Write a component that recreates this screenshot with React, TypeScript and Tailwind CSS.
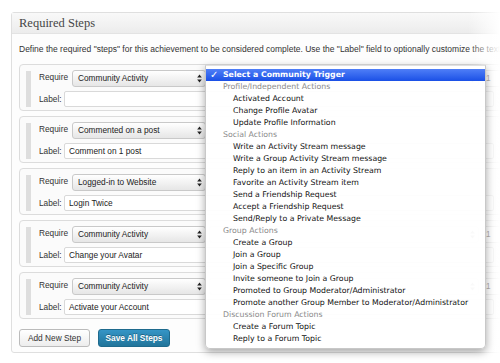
import React from "react";

type Step = { trigger: string; label: string; second: boolean };

const steps: Step[] = [
  { trigger: "Community Activity", label: "", second: true },
  { trigger: "Commented on a post", label: "Comment on 1 post", second: false },
  { trigger: "Logged-in to Website", label: "Login Twice", second: false },
  { trigger: "Community Activity", label: "Change your Avatar", second: true },
  { trigger: "Community Activity", label: "Activate your Account", second: true },
];

type MenuItem = { text: string; kind: "selected" | "group" | "item" };

const menu: MenuItem[] = [
  { text: "Select a Community Trigger", kind: "selected" },
  { text: "Profile/Independent Actions", kind: "group" },
  { text: "Activated Account", kind: "item" },
  { text: "Change Profile Avatar", kind: "item" },
  { text: "Update Profile Information", kind: "item" },
  { text: "Social Actions", kind: "group" },
  { text: "Write an Activity Stream message", kind: "item" },
  { text: "Write a Group Activity Stream message", kind: "item" },
  { text: "Reply to an item in an Activity Stream", kind: "item" },
  { text: "Favorite an Activity Stream item", kind: "item" },
  { text: "Send a Friendship Request", kind: "item" },
  { text: "Accept a Friendship Request", kind: "item" },
  { text: "Send/Reply to a Private Message", kind: "item" },
  { text: "Group Actions", kind: "group" },
  { text: "Create a Group", kind: "item" },
  { text: "Join a Group", kind: "item" },
  { text: "Join a Specific Group", kind: "item" },
  { text: "Invite someone to Join a Group", kind: "item" },
  { text: "Promoted to Group Moderator/Administrator", kind: "item" },
  { text: "Promote another Group Member to Moderator/Administrator", kind: "item" },
  { text: "Discussion Forum Actions", kind: "group" },
  { text: "Create a Forum Topic", kind: "item" },
  { text: "Reply to a Forum Topic", kind: "item" },
];

function UpDown() {
  return (
    <svg width="5" height="9" viewBox="0 0 5 9" className="shrink-0">
      <path d="M2.5 0.5 L4.8 3.6 L0.2 3.6 Z" fill="#222" />
      <path d="M2.5 8.5 L4.8 5.4 L0.2 5.4 Z" fill="#222" />
    </svg>
  );
}

function SelectBox({ text, className }: { text: string; className: string }) {
  return (
    <div
      className={`flex h-[17px] items-center justify-between rounded-[3px] border border-[#c9c9c9] bg-gradient-to-b from-[#ffffff] to-[#e6e6e6] pl-[5px] pr-[3px] text-[#222] ${className}`}
    >
      <span className="whitespace-nowrap">{text}</span>
      <UpDown />
    </div>
  );
}

function StepBox({ step }: { step: Step }) {
  return (
    <div className="flex h-[47px] w-[540px] shrink-0 gap-[8px] rounded-[4px] border border-[#dcdcdc] bg-[#fbfbfb] pl-[6px] pt-[5px]">
      <div className="mt-[1px] h-[36px] w-[5px] shrink-0 bg-[#dedede]" />
      <div className="flex flex-col gap-[4px]">
        <div className="flex items-center">
          <span className="-mt-[2px] w-[33px] text-[#333]">Require</span>
          <SelectBox text={step.trigger} className="w-[134px]" />
          {step.second && (
            <>
              <SelectBox text="" className="ml-[3px] w-[270px] opacity-60" />
              <div className="ml-[3px] flex h-[17px] w-[30px] items-center rounded-[2px] border border-[#d5d5d5] bg-white pl-[3px] text-[#222]">
                1
              </div>
            </>
          )}
        </div>
        <div className="flex items-center">
          <span className="w-[25px] text-[#333]">Label:</span>
          <div className="flex h-[16px] w-[430px] items-center rounded-[2px] border border-[#d9d9d9] bg-white pl-[4px] text-[#222]">
            {step.label}
          </div>
        </div>
      </div>
    </div>
  );
}

export default function App() {
  return (
    <div className="relative h-[363px] w-[500px] overflow-hidden bg-white font-['Liberation_Sans',Arial,sans-serif] text-[8.3px] leading-none">
      <div className="ml-[11px] mt-[12px] w-[560px] rounded-[3px] border border-[#dfdfdf] bg-[#fdfdfd]">
        <div className="flex h-[21px] items-center border-b border-[#e3e3e3] bg-gradient-to-b from-[#f9f9f9] to-[#ececec] pl-[7px] font-['Liberation_Serif',Georgia,serif] text-[12.5px] text-[#464646]">
          Required Steps
        </div>
        <div className="px-[7px] pb-[5px]">
          <div className="flex h-[30px] items-center whitespace-nowrap text-[8.5px] text-[#333]">
            Define the required "steps" for this achievement to be considered complete. Use the "Label" field to optionally customize the text
          </div>
          <div className="flex flex-col gap-[5px]">
            {steps.map((s, i) => (
              <StepBox key={i} step={s} />
            ))}
          </div>
          <div className="mt-[10px] flex gap-[8px]">
            <div className="flex h-[18px] w-[71px] items-center justify-center rounded-[3px] border border-[#bbbbbb] bg-gradient-to-b from-[#ffffff] to-[#ededed] text-[#333]">
              Add New Step
            </div>
            <div className="flex h-[18px] w-[72px] items-center justify-center rounded-[3px] border border-[#1e6a8d] bg-gradient-to-b from-[#3595c6] to-[#21759b] font-bold text-white [text-shadow:0_-1px_0_rgba(0,0,0,0.3)]">
              Save All Steps
            </div>
          </div>
        </div>
      </div>

      <div className="pointer-events-none absolute right-0 top-0 h-full w-[32px] bg-gradient-to-r from-white/0 to-white" />

      <div className="absolute left-[205px] top-[65px] w-[281px] rounded-b-[5px] border border-[#c8c8c8] border-t-[#e0e0e0] bg-white/95 py-[3px] font-['DejaVu_Sans',sans-serif] text-[7.8px] shadow-[0_3px_8px_rgba(0,0,0,0.35)]">
        {menu.map((m, i) =>
          m.kind === "selected" ? (
            <div
              key={i}
              className="flex h-[12px] items-center bg-gradient-to-b from-[#4f7ef7] to-[#1a4fe6] text-white"
            >
              <span className="w-[17px] pl-[4px] text-[10px] font-bold">✓</span>
              <span className="font-semibold">{m.text}</span>
            </div>
          ) : m.kind === "group" ? (
            <div key={i} className="flex h-[12px] items-center pl-[17px] text-[#8a8a8a]">
              {m.text}
            </div>
          ) : (
            <div key={i} className="flex h-[12px] items-center pl-[27px] text-[#111]">
              {m.text}
            </div>
          )
        )}
      </div>
    </div>
  );
}
